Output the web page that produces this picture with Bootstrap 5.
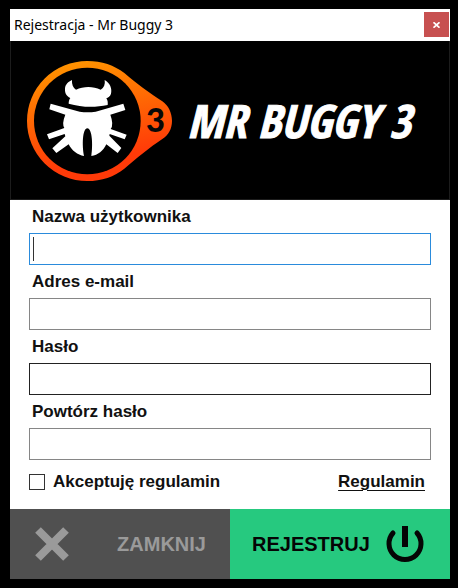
<!DOCTYPE html>
<html lang="pl">
<head>
<meta charset="utf-8">
<meta name="viewport" content="width=device-width, initial-scale=1">
<title>Rejestracja - Mr Buggy 3</title>
<link href="https://cdn.jsdelivr.net/npm/bootstrap@5.3.0/dist/css/bootstrap.min.css" rel="stylesheet">
<style>
  body { background: #000; padding: 9px 8px 9px 10px; font-family: "Liberation Sans", Arial, sans-serif; font-size: 17px; line-height: 20px; color: #111; }
  .title-bar { padding: 3px 1px 4px 4px; font: 14px/24px "Noto Sans", "Open Sans", sans-serif; color: #000; }
  .title-bar h1 { font: inherit; }
  .close-btn { width: 25px; height: 25px; background: #c75050; border: 0; }
  .brand { padding: 10px 8px; border: 1px solid #1c1c1c; border-top: 0; }
  .brand-name { font-family: "Noto Sans ExtraCondensed", "Open Sans Condensed", "Roboto Condensed", "Liberation Sans Narrow", "Liberation Sans", sans-serif; font-size: 46px; line-height: 56px; font-weight: 800; font-style: italic; color: #fff; -webkit-text-stroke: 1px #fff; }
  .fields { padding: 7px 19px 17px; }
  .fields .form-label { margin: 0 0 6px 3px; font-weight: 700; }
  .text-box { height: 32px; margin-bottom: 7px; padding: 0 6px; border: 1px solid #868686; border-radius: 0; background-color: #fff; }
  .text-box:focus, .text-box.current { border-color: #2a8bdc; box-shadow: none; caret-color: transparent; background: linear-gradient(#333, #333) 3px 3px / 1px 24px no-repeat #fff; }
  .text-box.hovered { border-color: #222; }
  .fields .tick { width: 16px; height: 16px; margin: 0; border: 1px solid #333; border-radius: 0; }
  .consent { padding-top: 5px; }
  .terms { color: #111; margin-right: 6px; text-decoration-thickness: 1px; text-underline-offset: 3px; }
  .action { border: 0; height: 70px; font-size: 20px; font-weight: 700; }
  .action-close { background: #505050; color: #9a9a9a; padding: 0 24px; }
  .action-register { background: #26c97f; color: #050505; padding: 0 26px 0 22px; }
</style>
<script src="https://cdn.jsdelivr.net/npm/bootstrap@5.3.0/dist/js/bootstrap.bundle.min.js" defer></script>
</head>
<body>
<main class="bg-white">
  <header class="title-bar d-flex align-items-center justify-content-between">
    <h1 class="m-0">Rejestracja - Mr Buggy 3</h1>
    <button type="button" class="close-btn d-flex align-items-center justify-content-center p-0" aria-label="Zamknij okno">
      <svg width="7" height="6" viewBox="0 0 7 6" aria-hidden="true"><path d="M.5 .3 6.5 5.7M6.5 .3 .5 5.7" stroke="#fff" stroke-width="1.7"/></svg>
    </button>
  </header>
  <div class="brand bg-black d-flex align-items-center">
    <svg class="flex-shrink-0" width="160" height="138" viewBox="0 3 480 414" role="img" aria-label="Mr Buggy 3">
      <defs>
        <linearGradient id="flame" x1="0" y1="0" x2="0.25" y2="1"><stop offset="0.1" stop-color="#ff9100"/><stop offset="0.9" stop-color="#ff3a08"/></linearGradient>
      </defs>
      <path fill="url(#flame)" d="M205 33C248 33 286 46 316 69C350 98 394 131 430 154C448 166 459 189 459 212C459 237 448 255 430 267C393 291 353 325 316 356C286 380 248 393 205 393A181 180 0 0 1 205 33Z"/>
      <circle cx="205" cy="213" r="160" fill="#000"/>
      <g fill="#fff">
        <path d="M159 90C158 103 162 113 171 119C194 108 222 108 245 119C255 113 259 103 257 90C273 99 280 116 276 131C274 139 267 143 262 145C266 150 267 158 266 165C226 173 188 172 149 161C149 155 150 149 154 144C142 139 137 129 138 115C139 103 148 95 159 90Z"/>
        <path d="M95 161 182 185Q206 188 230 185L313 161 319 180 274 194Q285 224 275 237L323 254 317 268 272 252 271 257 307 294 296 309 262 283C253 302 237 316 217 318C222 286 220 236 205 235C190 236 189 286 195 318C176 315 158 302 149 283L112 309 100 295 139 259 137 252 90 268 84 253 136 234Q128 221 139 194L91 178Z"/>
      </g>
      <text x="381" y="247" font-family="Lato, sans-serif" font-size="98" font-weight="900" fill="#080808">3</text>
    </svg>
    <div class="brand-name text-nowrap ps-2">MR BUGGY 3</div>
  </div>
  <form onsubmit="return false">
    <div class="fields">
      <label class="form-label d-block" for="user">Nazwa użytkownika</label>
      <input class="form-control text-box current" id="user" type="text" autofocus>
      <label class="form-label d-block" for="mail">Adres e-mail</label>
      <input class="form-control text-box" id="mail" type="email">
      <label class="form-label d-block" for="pass">Hasło</label>
      <input class="form-control text-box hovered" id="pass" type="password">
      <label class="form-label d-block" for="repeat">Powtórz hasło</label>
      <input class="form-control text-box" id="repeat" type="password">
      <div class="consent d-flex align-items-center justify-content-between fw-bold">
        <div class="d-flex align-items-center gap-2">
          <input class="form-check-input tick" id="accept" type="checkbox">
          <label for="accept">Akceptuję regulamin</label>
        </div>
        <a class="terms" href="#">Regulamin</a>
      </div>
    </div>
    <div class="row g-0">
      <button type="button" class="action action-close col-6 d-flex align-items-center justify-content-between">
        <svg width="36" height="36" viewBox="0 0 36 36" aria-hidden="true"><path d="M4 4 32 32M32 4 4 32" stroke="currentColor" stroke-width="8"/></svg>
        <span>ZAMKNIJ</span>
      </button>
      <button type="submit" class="action action-register col-6 d-flex align-items-center justify-content-between">
        <span>REJESTRUJ</span>
        <svg width="38" height="38" viewBox="0 0 38 38" fill="none" stroke="currentColor" aria-hidden="true"><path d="M19 1V22" stroke-width="6"/><path d="M7 8A16 16 0 1 0 31 8" stroke-width="5" stroke-linecap="round"/></svg>
      </button>
    </div>
  </form>
</main>
</body>
</html>
